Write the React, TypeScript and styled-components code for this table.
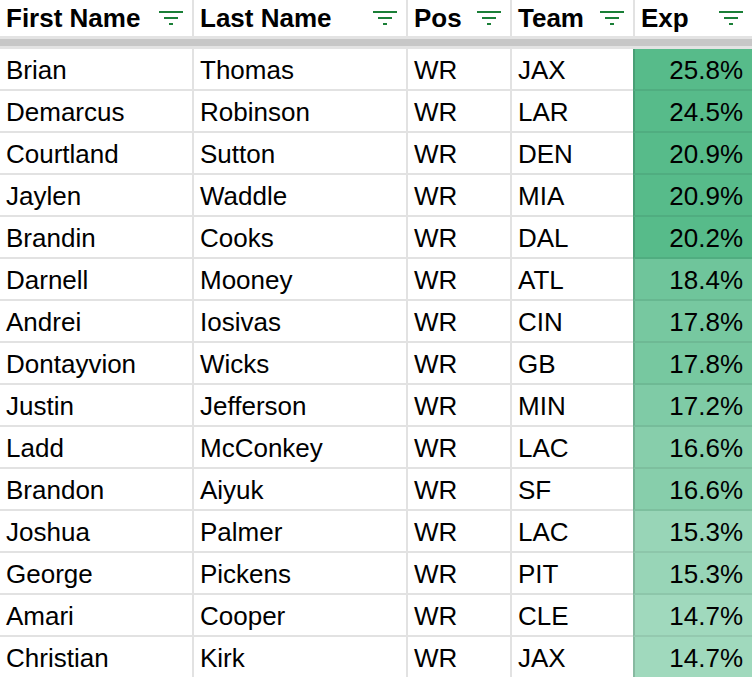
import React from "react";
import styled, { createGlobalStyle } from "styled-components";

type Player = { first: string; last: string; pos: string; team: string; exp: number };

const players: Player[] = [
  { first: "Brian", last: "Thomas", pos: "WR", team: "JAX", exp: 25.8 },
  { first: "Demarcus", last: "Robinson", pos: "WR", team: "LAR", exp: 24.5 },
  { first: "Courtland", last: "Sutton", pos: "WR", team: "DEN", exp: 20.9 },
  { first: "Jaylen", last: "Waddle", pos: "WR", team: "MIA", exp: 20.9 },
  { first: "Brandin", last: "Cooks", pos: "WR", team: "DAL", exp: 20.2 },
  { first: "Darnell", last: "Mooney", pos: "WR", team: "ATL", exp: 18.4 },
  { first: "Andrei", last: "Iosivas", pos: "WR", team: "CIN", exp: 17.8 },
  { first: "Dontayvion", last: "Wicks", pos: "WR", team: "GB", exp: 17.8 },
  { first: "Justin", last: "Jefferson", pos: "WR", team: "MIN", exp: 17.2 },
  { first: "Ladd", last: "McConkey", pos: "WR", team: "LAC", exp: 16.6 },
  { first: "Brandon", last: "Aiyuk", pos: "WR", team: "SF", exp: 16.6 },
  { first: "Joshua", last: "Palmer", pos: "WR", team: "LAC", exp: 15.3 },
  { first: "George", last: "Pickens", pos: "WR", team: "PIT", exp: 15.3 },
  { first: "Amari", last: "Cooper", pos: "WR", team: "CLE", exp: 14.7 },
  { first: "Christian", last: "Kirk", pos: "WR", team: "JAX", exp: 14.7 },
];

const headers = ["First Name", "Last Name", "Pos", "Team", "Exp"];

// colour scale: white -> #57bb8a, capped at ~20.2
function scaleColor(v: number): string {
  const lo = 7.56;
  const hi = 20.2;
  const t = Math.max(0, Math.min(1, (v - lo) / (hi - lo)));
  const mix = (a: number, b: number) => Math.round(a + (b - a) * t);
  return `rgb(${mix(255, 87)}, ${mix(255, 187)}, ${mix(255, 138)})`;
}

const GlobalStyle = createGlobalStyle`
  html, body {
    margin: 0;
    padding: 0;
    background: #fff;
    overflow: hidden;
  }
  body {
    font-family: "Liberation Sans", Arial, sans-serif;
    color: #000;
  }
`;

const Sheet = styled.div`
  display: grid;
  grid-template-columns: 194px 214px 104px 121px 119px;
  width: 752px;
`;

const HeaderCell = styled.div<{ $last?: boolean; $gap?: boolean }>`
  box-sizing: border-box;
  height: 36px;
  display: flex;
  align-items: center;
  justify-content: space-between;
  padding: 0 9px 0 6px;
  font-size: 26px;
  font-weight: 700;
  border-right: ${(p) => (p.$last || p.$gap ? "none" : "2px solid #e2e2e2")};
  border-left: ${(p) => (p.$last ? "2px solid #e2e2e2" : "none")};
`;

const FreezeBar = styled.div`
  grid-column: 1 / -1;
  box-sizing: border-box;
  height: 13px;
  background: #c7c7c7;
  border-top: 3px solid #e3e3e3;
  border-bottom: 3px solid #e3e3e3;
`;

const Cell = styled.div<{ $noRight?: boolean }>`
  box-sizing: border-box;
  height: 42px;
  display: flex;
  align-items: center;
  padding: 2px 6px 0;
  font-size: 26px;
  white-space: nowrap;
  border-bottom: 2px solid #e2e2e2;
  border-right: ${(p) => (p.$noRight ? "none" : "2px solid #e2e2e2")};
`;

const ExpCell = styled.div`
  box-sizing: border-box;
  height: 42px;
  display: flex;
  align-items: center;
  justify-content: flex-end;
  padding: 2px 9px 0 6px;
  font-size: 26px;
  border-left: 2px solid rgba(0, 0, 0, 0.14);
  border-bottom: 2px solid rgba(0, 0, 0, 0.07);
`;

const FilterIcon = () => (
  <svg width="24" height="14" viewBox="0 0 24 14" aria-hidden="true">
    <rect x="0" y="0" width="24" height="2" fill="#1a7f37" />
    <rect x="5" y="6" width="14" height="2" fill="#1a7f37" />
    <rect x="10" y="12" width="4" height="2" fill="#1a7f37" />
  </svg>
);

export default function App(): React.ReactElement {
  return (
    <>
      <GlobalStyle />
      <Sheet>
        {headers.map((h, i) => (
          <HeaderCell key={h} $gap={i === 3} $last={i === 4}>
            <span>{h}</span>
            <FilterIcon />
          </HeaderCell>
        ))}
        <FreezeBar />
        {players.map((p) => (
          <React.Fragment key={p.first + p.last}>
            <Cell>{p.first}</Cell>
            <Cell>{p.last}</Cell>
            <Cell>{p.pos}</Cell>
            <Cell $noRight>{p.team}</Cell>
            <ExpCell style={{ background: scaleColor(p.exp) }}>{p.exp.toFixed(1)}%</ExpCell>
          </React.Fragment>
        ))}
      </Sheet>
    </>
  );
}
